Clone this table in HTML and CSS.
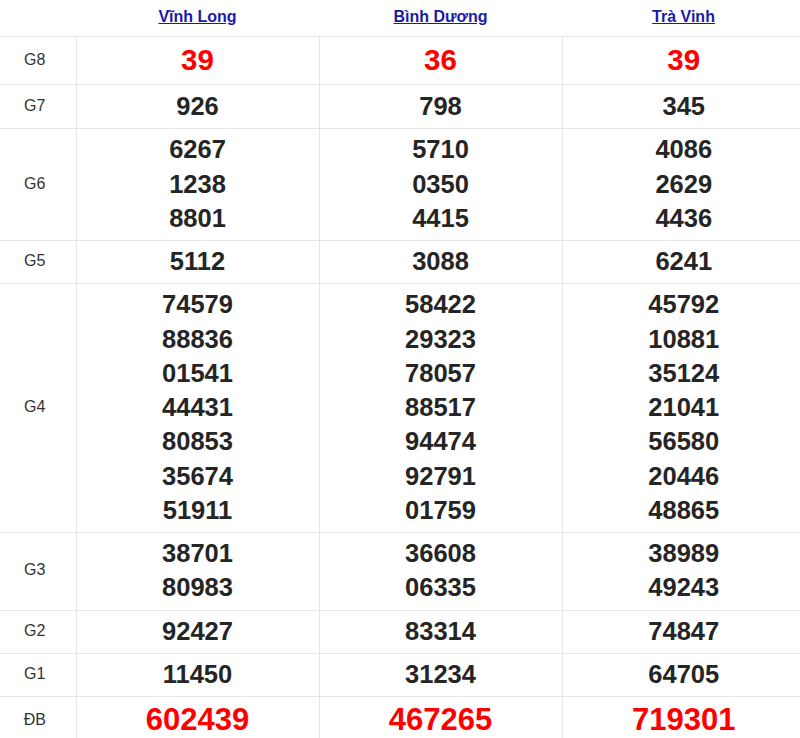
FILE: index.html
```html
<!DOCTYPE html>
<html lang="vi">
<head>
<meta charset="utf-8">
<title>Kết quả xổ số</title>
<link rel="stylesheet" href="styles.css">
</head>
<body>
<table class="kq">
  <colgroup>
    <col class="c-label">
    <col class="c-prov">
    <col class="c-prov">
    <col class="c-prov">
  </colgroup>
  <thead>
    <tr class="head">
      <th></th>
      <th><a href="#" class="prov">Vĩnh Long</a></th>
      <th><a href="#" class="prov">Bình Dương</a></th>
      <th><a href="#" class="prov">Trà Vinh</a></th>
    </tr>
  </thead>
  <tbody>
    <tr class="r-g8">
      <td class="lbl">G8</td>
      <td><div class="n red big">39</div></td>
      <td><div class="n red big">36</div></td>
      <td><div class="n red big">39</div></td>
    </tr>
    <tr class="r-g7">
      <td class="lbl">G7</td>
      <td><div class="n">926</div></td>
      <td><div class="n">798</div></td>
      <td><div class="n">345</div></td>
    </tr>
    <tr>
      <td class="lbl">G6</td>
      <td><div class="n">6267</div><div class="n">1238</div><div class="n">8801</div></td>
      <td><div class="n">5710</div><div class="n">0350</div><div class="n">4415</div></td>
      <td><div class="n">4086</div><div class="n">2629</div><div class="n">4436</div></td>
    </tr>
    <tr>
      <td class="lbl">G5</td>
      <td><div class="n">5112</div></td>
      <td><div class="n">3088</div></td>
      <td><div class="n">6241</div></td>
    </tr>
    <tr>
      <td class="lbl">G4</td>
      <td><div class="n">74579</div><div class="n">88836</div><div class="n">01541</div><div class="n">44431</div><div class="n">80853</div><div class="n">35674</div><div class="n">51911</div></td>
      <td><div class="n">58422</div><div class="n">29323</div><div class="n">78057</div><div class="n">88517</div><div class="n">94474</div><div class="n">92791</div><div class="n">01759</div></td>
      <td><div class="n">45792</div><div class="n">10881</div><div class="n">35124</div><div class="n">21041</div><div class="n">56580</div><div class="n">20446</div><div class="n">48865</div></td>
    </tr>
    <tr>
      <td class="lbl">G3</td>
      <td><div class="n">38701</div><div class="n">80983</div></td>
      <td><div class="n">36608</div><div class="n">06335</div></td>
      <td><div class="n">38989</div><div class="n">49243</div></td>
    </tr>
    <tr>
      <td class="lbl">G2</td>
      <td><div class="n">92427</div></td>
      <td><div class="n">83314</div></td>
      <td><div class="n">74847</div></td>
    </tr>
    <tr>
      <td class="lbl">G1</td>
      <td><div class="n">11450</div></td>
      <td><div class="n">31234</div></td>
      <td><div class="n">64705</div></td>
    </tr>
    <tr class="r-db">
      <td class="lbl">ĐB</td>
      <td><div class="n red huge">602439</div></td>
      <td><div class="n red huge">467265</div></td>
      <td><div class="n red huge">719301</div></td>
    </tr>
  </tbody>
</table>
</body>
</html>
```

FILE: styles.css
```css
html, body {
  margin: 0;
  padding: 0;
  background: #ffffff;
  overflow: hidden;
}

body {
  font-family: "Liberation Sans", Arial, sans-serif;
  color: #222222;
}

.kq {
  width: 805px;
  border-collapse: collapse;
  table-layout: fixed;
}

.c-label {
  width: 76px;
}

.head th {
  height: 36px;
  padding: 0;
  text-align: center;
  vertical-align: top;
  font-weight: bold;
  font-size: 16px;
  line-height: 33px;
}

.prov {
  color: #1a1aa8;
  text-decoration: underline;
}

.kq tbody tr {
  border-top: 1px solid #e6e6e6;
}

.kq tbody td {
  padding: 3px 0 5px 0;
  text-align: center;
  vertical-align: middle;
}

.kq tbody .r-g7 td {
  padding: 4px 0 5px 0;
}

.kq tbody td + td {
  border-left: 1px solid #e6e6e6;
}

.lbl {
  font-size: 16px;
  color: #333333;
  padding-right: 6px !important;
}

.n {
  font-size: 25.5px;
  font-weight: bold;
  line-height: 34.25px;
  color: #252525;
}

.red {
  color: #ff0000;
}

.big {
  font-size: 29.5px;
  line-height: 39px;
}

.huge {
  font-size: 31px;
  line-height: 39px;
}
```
